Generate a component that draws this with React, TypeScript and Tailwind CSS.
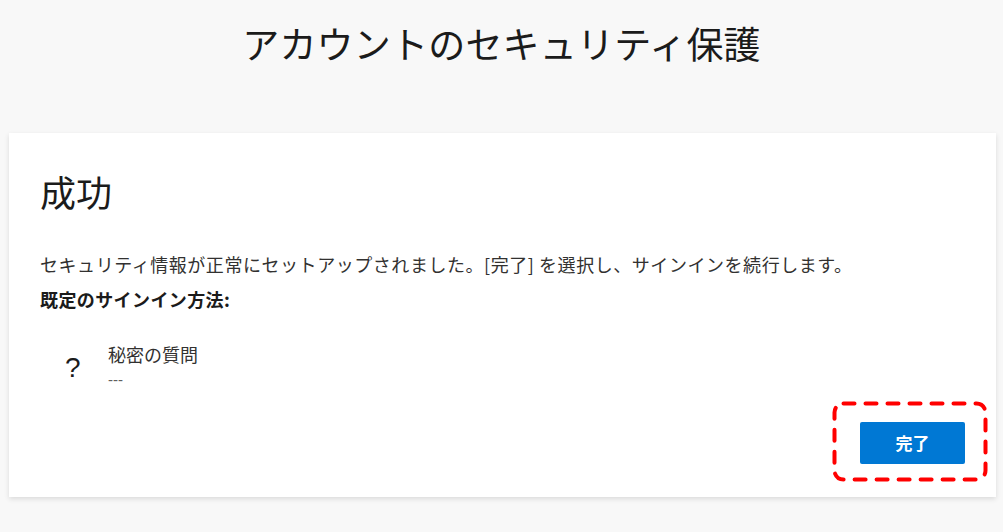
import React from "react";

export default function App() {
  return (
    <div
      className="w-[1003px] h-[532px] bg-[#f8f8f8] overflow-hidden flex flex-col"
      style={{ fontFamily: '"Noto Sans CJK JP", "Noto Sans", sans-serif' }}
    >
      <div className="h-[133px] flex justify-center pt-[19px]">
        <h1 className="text-[37px] leading-[48px] text-[#1b1b1b] font-normal tracking-[0.2px]">
          アカウントのセキュリティ保護
        </h1>
      </div>
      <div className="ml-[9px] w-[987px] bg-white shadow-[0_2px_5px_rgba(0,0,0,0.12)] pt-[34px] pb-[33px] pl-[31px] pr-[31px]">
        <h2 className="text-[36px] leading-[48px] text-[#1b1b1b] font-normal">成功</h2>
        <p className="mt-[37px] text-[18px] leading-[24px] text-[#323130] tracking-[0.55px]">
          セキュリティ情報が正常にセットアップされました。[完了] を選択し、サインインを続行します。
        </p>
        <p className="mt-[11px] text-[18px] leading-[24px] text-[#1b1b1b] font-bold tracking-[0.4px]">
          既定のサインイン方法:
        </p>
        <div className="mt-[31px] flex">
          <div className="w-[68px] pl-[25px] flex items-center">
            <span
              className="text-[28px] leading-[30px] text-[#1b1b1b] mt-[4px]"
              style={{ fontFamily: '"Liberation Sans", Arial, sans-serif' }}
            >
              ?
            </span>
          </div>
          <div className="flex flex-col">
            <span className="text-[18px] leading-[24px] text-[#323130]">秘密の質問</span>
            <span
              className="mt-[4px] text-[15px] leading-[20px] text-[#605e5c]"
              style={{ fontFamily: '"Liberation Sans", Arial, sans-serif' }}
            >
              ---
            </span>
          </div>
        </div>
        <div className="mt-[32px] flex justify-end">
          <div className="relative">
            <button className="w-[105px] h-[42px] bg-[#0078d4] rounded-[2px] text-white text-[17px] font-bold flex items-center justify-center">
              完了
            </button>
            <svg
              className="absolute left-[-28px] top-[-21px]"
              width="156"
              height="81"
              viewBox="0 0 156 81"
              fill="none"
            >
              <rect
                x="2.5"
                y="2.5"
                width="151"
                height="76"
                rx="9"
                stroke="#ff0000"
                strokeWidth="4"
                strokeDasharray="11 11"
                strokeLinecap="round"
              />
            </svg>
          </div>
        </div>
      </div>
    </div>
  );
}
